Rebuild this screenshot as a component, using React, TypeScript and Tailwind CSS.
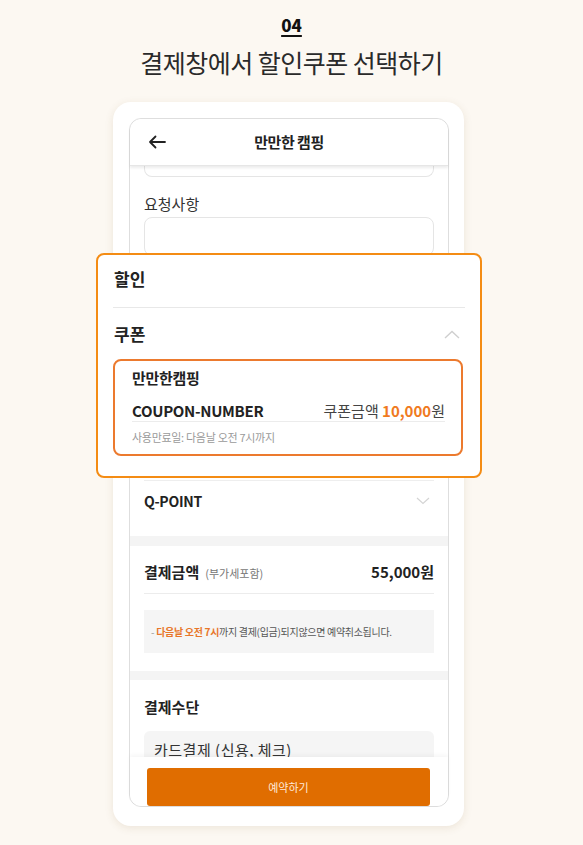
import React from "react";

const font = "font-['Noto_Sans_CJK_KR','Noto_Sans',sans-serif]";

function ChevronUp() {
  return (
    <svg width="16" height="9" viewBox="0 0 16 9" fill="none">
      <path d="M1 8 L8 1.5 L15 8" stroke="#cfcfcf" strokeWidth="1.4" />
    </svg>
  );
}

function ChevronDown() {
  return (
    <svg width="14" height="8" viewBox="0 0 14 8" fill="none">
      <path d="M1 1 L7 6.5 L13 1" stroke="#d4d4d4" strokeWidth="1.2" />
    </svg>
  );
}

function BackArrow() {
  return (
    <svg width="18" height="14" viewBox="0 0 18 14" fill="none">
      <path d="M17 7 H2 M7.5 1.5 L2 7 L7.5 12.5" stroke="#222" strokeWidth="1.8" strokeLinecap="round" strokeLinejoin="round" />
    </svg>
  );
}

export default function App() {
  return (
    <div className={`${font} min-h-[845px] w-full bg-[#fcf8f2] flex flex-col items-center`}>
      <div className="mt-[15px] text-[17px] leading-[20px] font-black text-[#111] underline underline-offset-[3px] decoration-[1.5px]">
        04
      </div>
      <h1 className="mt-[11px] text-[25px] leading-[32px] text-[#2a2a2a] tracking-[-0.5px]">
        결제창에서 할인쿠폰 선택하기
      </h1>

      <div className="mt-[24px] mr-[6px] w-[351px] rounded-[18px] bg-white shadow-[0_2px_8px_rgba(120,90,40,0.12)] pl-[16px] pr-[15px] pt-[16px] pb-[19px]">
        <div className="w-[320px] rounded-[12px] border border-[#dedede] bg-white">
          {/* header */}
          <div className="relative z-20 h-[47px] grid grid-cols-[48px_1fr_48px] items-center rounded-t-[12px] bg-white shadow-[0_2px_3px_rgba(0,0,0,0.08)] border-b border-[#e6e6e6]">
            <div className="pl-[18px] flex items-center">
              <BackArrow />
            </div>
            <div className="text-center text-[15px] font-bold text-[#222] tracking-[-0.5px]">만만한 캠핑</div>
            <div />
          </div>

          <div className="px-[14px]">
            <div className="h-[11px] border border-t-0 border-[#e5e5e5] rounded-b-[8px]" />
            <div className="mt-[17px] text-[15px] leading-[20px] text-[#333]">요청사항</div>
            <div className="mt-[3px] h-[39px] border border-[#e5e5e5] rounded-[8px]" />

            {/* overlay */}
            <div className="relative z-10 -mt-[3px] -mx-[48px] rounded-[8px] border-2 border-[#f48c14] bg-white">
              <div className="pt-[12px] pl-[16px] text-[17px] leading-[24px] font-bold text-[#222]">할인</div>
              <div className="mt-[16px] mx-[15px] h-px bg-[#e8e8e8]" />
              <div className="mt-[14px] pl-[16px] pr-[20px] flex items-center justify-between">
                <div className="text-[17px] leading-[24px] font-bold text-[#222]">쿠폰</div>
                <ChevronUp />
              </div>
              <div className="mt-[13px] ml-[15px] mr-[17px] rounded-[8px] border-2 border-[#ec7a2e] pt-[7px] pl-[17px] pr-[16px] pb-[9px]">
                <div className="text-[15px] leading-[20px] font-bold text-[#222] tracking-[-0.3px]">만만한캠핑</div>
                <div className="mt-[13px] flex items-center justify-between text-[15px] leading-[20px]">
                  <span className="font-semibold text-[#222] tracking-[-0.3px]">COUPON-NUMBER</span>
                  <span className="text-[#444]">
                    쿠폰금액 <span className="font-bold text-[#f07a1e]">10,000</span>
                    <span className="text-[#444]">원</span>
                  </span>
                </div>
                <div className="h-px bg-[#ececec]" />
                <div className="mt-[7px] text-[11px] leading-[16px] text-[#9a9a9a] tracking-[-0.3px]">사용만료일: 다음날 오전 7시까지</div>
              </div>
              <div className="h-[20px]" />
            </div>

            <div className="mt-[2px] h-px bg-[#eeeeee]" />
            <div className="mt-[10px] flex items-center justify-between pr-[4px]">
              <span className="text-[14px] leading-[20px] font-bold text-[#222] tracking-[-0.3px]">Q-POINT</span>
              <ChevronDown />
            </div>
            <div className="mt-[25px] -mx-[14px] h-[10px] bg-[#f4f4f4]" />

            <div className="mt-[16px] flex items-center justify-between">
              <div className="flex items-baseline gap-[6px]">
                <span className="text-[15px] leading-[20px] font-bold text-[#222]">결제금액</span>
                <span className="text-[11px] text-[#777]">(부가세포함)</span>
              </div>
              <span className="text-[15px] leading-[20px] font-bold text-[#222]">55,000원</span>
            </div>
            <div className="mt-[11px] h-px bg-[#ececec]" />
            <div className="mt-[16px] h-[43px] bg-[#f5f5f5] flex items-center pl-[7px] text-[10px] text-[#555] tracking-[-0.3px]">
              <span>
                <span className="text-[#999]">-</span> <span className="font-bold text-[#e8772a]">다음날 오전 7시</span>까지 결제(입금)되지않으면 예약취소됩니다.
              </span>
            </div>
            <div className="mt-[18px] -mx-[14px] h-[9px] bg-[#f4f4f4]" />

            <div className="mt-[17px] text-[15px] leading-[20px] font-bold text-[#222]">결제수단</div>
            <div className="mt-[14px] h-[26px] overflow-hidden rounded-t-[6px] bg-[#f5f5f5] pl-[10px] pt-[9px]">
              <div className="text-[15px] leading-[20px] text-[#333] tracking-[0.5px]">카드결제 (신용, 체크)</div>
            </div>
          </div>

          {/* bottom bar */}
          <div className="relative z-10 bg-white rounded-b-[12px] pl-[17px] pr-[18px] pt-[11px] shadow-[0_-2px_4px_rgba(0,0,0,0.04)]">
            <div className="h-[38px] rounded-[3px] bg-[#e06d00] flex items-center justify-center text-[11px] text-[#ffe9d8]">
              예약하기
            </div>
          </div>
        </div>
      </div>
    </div>
  );
}
